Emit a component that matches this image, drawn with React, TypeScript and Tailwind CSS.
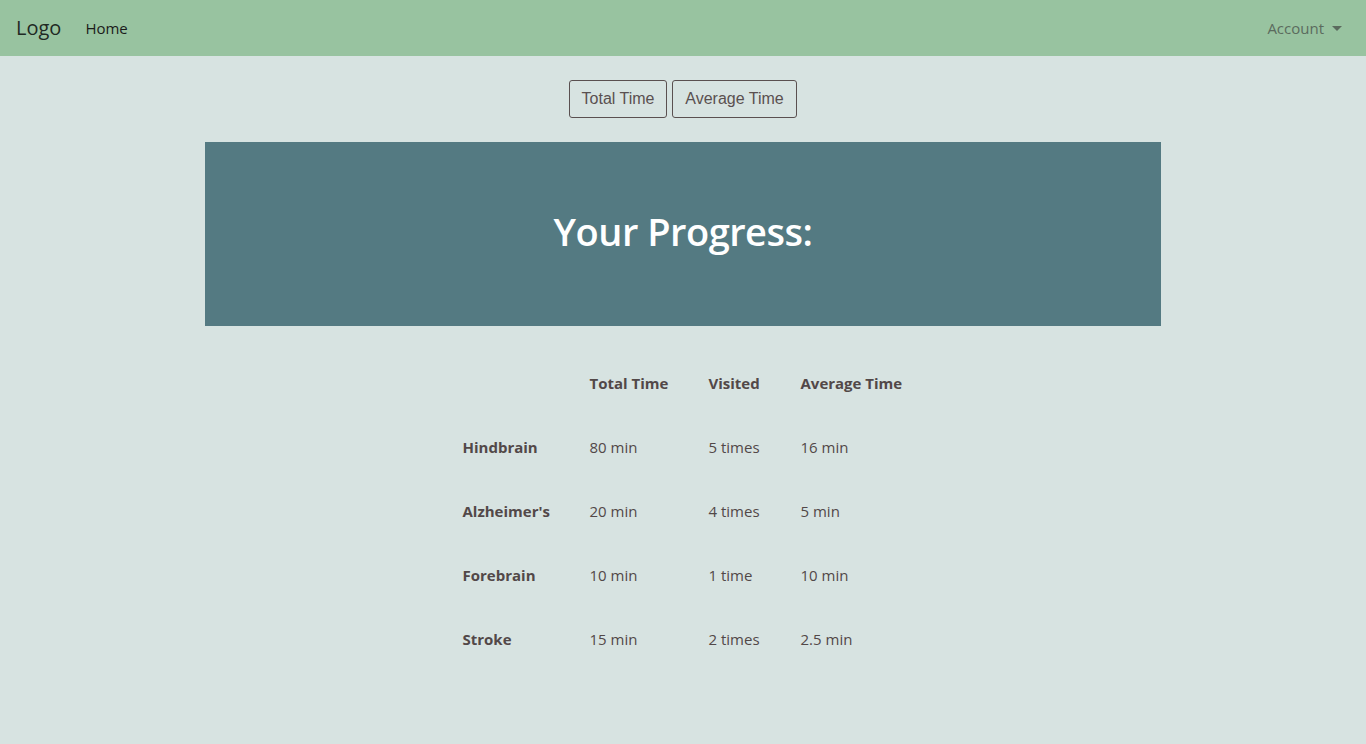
const rows = [
  { name: 'Hindbrain', total: '80 min', visited: '5 times', avg: '16 min' },
  { name: "Alzheimer's", total: '20 min', visited: '4 times', avg: '5 min' },
  { name: 'Forebrain', total: '10 min', visited: '1 time', avg: '10 min' },
  { name: 'Stroke', total: '15 min', visited: '2 times', avg: '2.5 min' },
];

export default function App() {
  return (
    <div className="min-h-[744px] bg-[#d7e3e1] font-['Open_Sans',sans-serif]">
      {/* Navbar */}
      <nav className="flex h-14 items-center justify-between bg-[#98c3a0] pl-4 pr-6">
        <div className="flex items-center">
          <span className="text-[20px] text-[#1f2a24]">Logo</span>
          <a className="ml-6 text-[15px] text-[#1b1b1b]">Home</a>
        </div>
        <div className="flex items-center gap-2 text-[15px] text-[#5b6b5e]">
          Account
          <span className="mt-[1px] h-0 w-0 border-x-[5px] border-t-[5px] border-x-transparent border-t-[#5b6b5e]" />
        </div>
      </nav>

      {/* Toggle buttons */}
      <div className="flex justify-center gap-[5px] pt-6 font-['Liberation_Sans',Arial,sans-serif]">
        <button className="h-[38px] w-[98px] rounded-[3px] border border-[#5a5050] text-[16px] text-[#5a5050]">
          Total Time
        </button>
        <button className="h-[38px] w-[125px] rounded-[3px] border border-[#5a5050] text-[16px] text-[#5a5050]">
          Average Time
        </button>
      </div>

      {/* Banner */}
      <div className="mx-auto mt-6 flex h-[184px] w-[956px] items-center justify-center bg-[#547a82]">
        <h1 className="pb-[6px] text-[38px] font-semibold tracking-[-0.5px] text-white">Your Progress:</h1>
      </div>

      {/* Table */}
      <div className="mx-auto mt-[25px] w-[441px] text-[15px] text-[#524848]">
        <div className="grid h-[64px] grid-cols-[127px_119px_92px_103px] items-center font-bold">
          <div />
          <div>Total Time</div>
          <div>Visited</div>
          <div>Average Time</div>
        </div>
        {rows.map((r) => (
          <div key={r.name} className="grid h-[64px] grid-cols-[127px_119px_92px_103px] items-center">
            <div className="font-bold">{r.name}</div>
            <div>{r.total}</div>
            <div>{r.visited}</div>
            <div>{r.avg}</div>
          </div>
        ))}
      </div>
    </div>
  );
}
